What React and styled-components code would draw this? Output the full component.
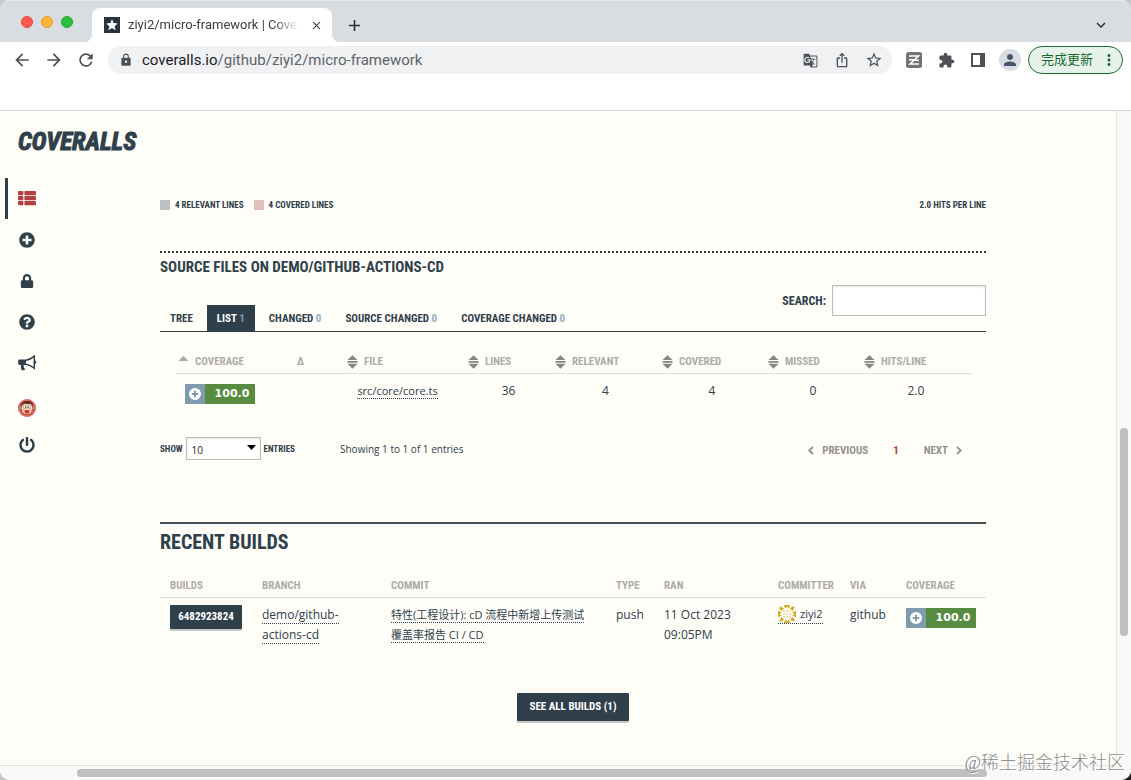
import React from "react";
import styled, { createGlobalStyle } from "styled-components";
import { FaLock, FaPlusCircle, FaQuestionCircle, FaPowerOff } from "react-icons/fa";
import {
  MdArrowBack,
  MdArrowForward,
  MdRefresh,
  MdStarBorder,
  MdExtension,
  MdPerson,
  MdLock,
  MdGTranslate,
  MdIosShare,
  MdKeyboardArrowDown,
  MdAdd,
  MdClose,
  MdMoreVert,
  MdStar,
} from "react-icons/md";

const ink = "#2f404b";
const condensed = `"Roboto Condensed", "Liberation Sans Narrow", "DejaVu Sans Condensed", sans-serif`;
const body = `"Open Sans", "Noto Sans CJK SC", sans-serif`;
const chrome = `Roboto, "Noto Sans CJK SC", sans-serif`;

const GlobalStyle = createGlobalStyle`
  * { box-sizing: border-box; }
  body {
    margin: 0;
    background: linear-gradient(135deg, #c6c8ca 70%, #222 100%);
    color: ${ink};
    font-family: ${body};
    font-size: 12px;
    line-height: 20px;
  }
  button, input, select { font: inherit; color: inherit; margin: 0; }
  button { border: 0; padding: 0; background: none; cursor: pointer; }
  a { color: inherit; text-decoration: none; }
  svg { display: block; flex: none; }
`;

const Window = styled.div`
  display: flex;
  flex-direction: column;
  min-height: 100vh;
  border-radius: 10px;
  overflow: hidden;
  background: #fff;
  position: relative;
`;

/* Browser frame */
const TabStrip = styled.header`
  display: flex;
  align-items: flex-end;
  height: 42px;
  padding-right: 20px;
  background: #d9dce1;
  border-top: 1px solid #e6e8eb;
  font-family: ${chrome};
`;
const Lights = styled.div`
  display: flex;
  gap: 8px;
  align-self: center;
  padding-left: 21px;
  width: 92px;
`;
const Light = styled.button`
  width: 12px;
  height: 12px;
  border-radius: 50%;
  background: ${(p) => p.$fill};
  border: 1px solid ${(p) => p.$edge};
`;
const BrowserTab = styled.div`
  position: relative;
  display: flex;
  align-items: center;
  gap: 8px;
  width: 240px;
  height: 34px;
  padding: 0 10px 0 12px;
  border-radius: 8px 8px 0 0;
  background: #fff;
  color: #3c4043;
  &::before, &::after {
    content: "";
    position: absolute;
    bottom: 0;
    width: 8px;
    height: 8px;
  }
  &::before { left: -8px; background: radial-gradient(circle at 0 0, transparent 8px, #fff 8px); }
  &::after { right: -8px; background: radial-gradient(circle at 100% 0, transparent 8px, #fff 8px); }
`;
const Favicon = styled.span`
  display: grid;
  place-items: center;
  width: 16px;
  height: 16px;
  background: #263640;
  color: #fff;
`;
const TabTitle = styled.span`
  flex: 1;
  white-space: nowrap;
  font-size: 13px;
  mask-image: linear-gradient(to right, #000 84%, transparent 98%);
`;
const IconButton = styled.button`
  display: grid;
  place-items: center;
  width: ${(p) => p.$size || 24}px;
  height: ${(p) => p.$size || 24}px;
  color: ${(p) => p.$color || "#4d5156"};
`;
const NewTab = styled(IconButton)`
  margin: 0 auto 5px 10px;
`;
const TabMenu = styled(IconButton)`
  margin-bottom: 7px;
`;
const Toolbar = styled.nav`
  display: flex;
  align-items: center;
  gap: 8px;
  height: 36px;
  padding: 0 8px 0 10px;
  font-family: ${chrome};
`;
const AddressBar = styled.div`
  display: flex;
  flex: 1;
  align-items: center;
  gap: 8px;
  height: 28px;
  margin: 0 2px;
  padding: 0 6px 0 11px;
  border-radius: 14px;
  background: #eff1f3;
  color: #4d5156;
`;
const Url = styled.a`
  flex: 1;
  font-size: 15px;
  padding-left: 1px;
  color: #5f6368;
  b { font-weight: 400; color: #202124; }
`;
const Profile = styled.button`
  display: grid;
  place-items: center;
  width: 22px;
  height: 22px;
  margin: 0 -1px 0 1px;
  border-radius: 50%;
  background: #d9dce3;
  color: #46536a;
`;
const UpdateButton = styled.button`
  display: flex;
  align-items: center;
  justify-content: space-between;
  width: 95px;
  height: 28px;
  padding: 0 4px 0 12px;
  border: 1px solid #1b6b34;
  border-radius: 14px;
  background: #e7f2ea;
  color: #17692f;
  font-size: 13px;
`;
const Bookmarks = styled.div`
  height: 33px;
  border-bottom: 1px solid #d3d5d8;
`;

/* Scrollable viewport */
const Viewport = styled.div`
  flex: 1;
  display: grid;
  grid-template-columns: minmax(0, 1fr) 15px;
  grid-template-rows: 1fr 15px;
`;
const Track = styled.div`
  display: flex;
  flex-direction: ${(p) => (p.$vertical ? "column" : "row")};
  padding: ${(p) => (p.$vertical ? "0 3px" : "3px 0")};
  background: #f9f9f9;
  border: 0 solid #e3e3e2;
  border-width: ${(p) => (p.$vertical ? "0 0 0 1px" : "1px 0 0 0")};
`;
const Space = styled.i`
  flex: ${(p) => p.$grow} 0 0;
`;
const Thumb = styled(Space)`
  border-radius: 4px;
  background: #bfbfbf;
`;
const Corner = styled.div`
  background: #f9f9f9;
`;
const Page = styled.div`
  background: #fefdf8;
  display: grid;
  grid-template-columns: 160px minmax(0, 1fr) 130px;
`;

/* Site sidebar */
const Logo = styled.a`
  display: block;
  padding: 15px 0 0 18px;
  font: italic 700 25px/32px ${condensed};
  -webkit-text-stroke: 1px ${ink};
`;
const SideNav = styled.nav`
  display: flex;
  flex-direction: column;
  padding: 20px 0 0 5px;
`;
const SideLink = styled.a`
  display: grid;
  place-items: center;
  width: 41px;
  height: 41px;
  padding-top: ${(p) => (p.$photo ? 9 : 0)}px;
  border-left: 3px solid ${(p) => (p.$active ? ink : "transparent")};
  color: ${(p) => (p.$active ? "#b23f42" : ink)};
`;

/* Main column */
const Main = styled.main`
  display: flex;
  flex-direction: column;
  padding: 84px 0 40px;
`;
const Legend = styled.div`
  display: flex;
  gap: 10px;
  height: 20px;
  margin-bottom: 36px;
  font: 700 9px/20px ${condensed};
`;
const Key = styled.span`
  display: flex;
  align-items: center;
  gap: 5px;
  &::before { content: ""; width: 10px; height: 10px; background: ${(p) => p.$color}; }
`;
const Hits = styled.span`
  margin-left: auto;
`;
const Section = styled.section`
  display: flex;
  flex-direction: column;
  border-top: 2px ${(p) => (p.$dotted ? "dotted #2f404b" : "solid #435058")};
`;
const Title = styled.h3`
  margin: 0 0 4px;
  font: 700 15px/28px ${condensed};
`;
const BigTitle = styled.h2`
  margin: 0 0 16px;
  font: 700 20px/36px ${condensed};
`;
const Tools = styled.div`
  display: flex;
  align-items: flex-end;
  justify-content: space-between;
  height: 47px;
  margin-bottom: 20px;
  border-bottom: 1px solid ${ink};
`;
const Tabs = styled.div`
  display: flex;
  gap: 4px;
`;
const Tab = styled.button`
  height: 26px;
  padding: 2px 10px 0;
  background: ${(p) => (p.$active ? ink : "transparent")};
  color: ${(p) => (p.$active ? "#fff" : ink)};
  font: 700 11px/24px ${condensed};
  white-space: nowrap;
  small { font-size: 11px; color: ${(p) => (p.$active ? "#7f9bb0" : "#93aec3")}; }
`;
const Search = styled.label`
  display: flex;
  align-items: center;
  gap: 6px;
  align-self: flex-start;
  font: 700 12px/20px ${condensed};
`;
const SearchBox = styled.input`
  width: 154px;
  height: 31px;
  padding: 0 8px;
  border: 1px solid #bdbdbd;
  background: #fff;
  box-shadow: inset 0 1px 2px #e4e4e4;
`;

const Table = styled.table`
  table-layout: fixed;
  border-collapse: collapse;
  margin: 0 ${(p) => p.$inset || 0}px;
`;
const Th = styled.th`
  height: 21px;
  padding: 0 0 0 10px;
  border-bottom: 1px solid #dcdcd8;
  color: #adaca8;
  text-align: left;
  font: 700 11px/20px ${condensed};
  white-space: nowrap;
`;
const SortButton = styled.button`
  display: flex;
  align-items: center;
  gap: 6px;
  font: inherit;
`;
const Td = styled.td`
  vertical-align: top;
  padding: 7px 0 8px 10px;
  white-space: nowrap;
`;
const FileTd = styled.td`
  height: 43px;
  vertical-align: top;
  padding: 7px 0 0 ${(p) => p.$indent || 0}px;
  text-align: center;
`;
const DottedLink = styled.a`
  display: ${(p) => (p.$flex ? "inline-flex" : "inline")};
  gap: 4px;
  align-items: center;
  border-bottom: 1px dotted ${ink};
  font-size: ${(p) => p.$size || 12}px;
  line-height: ${(p) => (p.$flex ? "18px" : "20px")};
`;
const Badge = styled.a`
  display: flex;
  width: 70px;
  height: 20px;
  margin: 3px 0 0 ${(p) => p.$left || 0}px;
  background: #568b40;
  color: #fff;
  font: 700 11px/20px "DejaVu Sans", sans-serif;
  text-align: center;
  span { flex: 1; padding-left: 4px; }
`;
const BadgeIcon = styled.i`
  display: grid;
  place-items: center;
  width: 20px;
  background: #7e9bb0;
`;
const TableFooter = styled.div`
  display: flex;
  align-items: center;
  height: 23px;
  margin: 21px 0 62px;
`;
const Entries = styled.label`
  display: flex;
  align-items: center;
  gap: 3px;
  width: 180px;
  font: 700 9px/20px ${condensed};
`;
const SelectWrap = styled.span`
  display: grid;
  align-items: center;
  > * { grid-area: 1 / 1; }
  svg { justify-self: end; margin: 0 5px 2px 0; pointer-events: none; }
`;
const Select = styled.select`
  appearance: none;
  width: 75px;
  height: 23px;
  padding: 2px 5px 0;
  border: 1px solid #bdbdbd;
  border-radius: 0;
  background: #fff;
  box-shadow: inset 0 1px 2px #e4e4e4;
  color: #222;
  font: 400 10px/20px ${body};
`;
const Info = styled.span`
  font-size: 10px;
`;
const Pager = styled.nav`
  display: flex;
  align-items: center;
  gap: 25px;
  margin: 4px 24px 0 auto;
  color: #92918e;
  font: 700 11px/20px ${condensed};
  a { display: flex; align-items: center; gap: 8px; }
`;
const Current = styled.a`
  color: #b8373b;
`;
const BuildButton = styled.a`
  display: block;
  width: 72px;
  height: 24px;
  border-radius: 1px;
  background: ${ink};
  box-shadow: 0 2px 0 #c5c7c6;
  color: #fff;
  text-align: center;
  font: 700 11px/24px ${condensed};
`;
const SeeAll = styled(BuildButton)`
  align-self: center;
  width: 112px;
  height: 28px;
  margin-top: 40px;
  line-height: 28px;
`;
const Watermark = styled.div`
  position: absolute;
  right: 6px;
  bottom: 4px;
  color: #8d8d8d;
  font: 300 18px/26px "Liberation Serif", "Noto Sans CJK SC", serif;
  text-shadow: 1px 1px 0 #fff;
`;

/* Drawings */
const SortIcon = ({ up }) => (
  <svg width="11" height="14" viewBox="0 0 11 14" fill={up ? "#adaca8" : "#868686"}>
    <path d={up ? "M5.500.7 10.500 6H.500z" : "M5.500.300 10.500 5H.500zM.500 6h10v1.800H.500zM.500 8.800h10L5.500 13.700z"} />
  </svg>
);
const ListIcon = () => (
  <svg width="18" height="15" viewBox="0 0 18 15" fill="currentColor">
    {[0, 5, 10].map((y) => (
      <g key={y}>
        <rect x="0" y={y} width="5.400" height="4.200" rx="1" />
        <rect x="6.400" y={y} width="11.600" height="4.200" rx="1" />
      </g>
    ))}
  </svg>
);
const HornIcon = () => (
  <svg width="19" height="16" viewBox="0 0 19 16" fill="currentColor">
    <path d="M1.500 4.500H8V10H5.800c-.6 1 .2 1.500.1 2.300 0 .7.700 1.200 1.400 1.900-.8 1.400-2.900 1.300-3.800.7-.4-1.600-1-3.200-.5-4.900H1.500C.7 10 .2 9.400.2 8.600V5.900c0-.8.500-1.400 1.300-1.400z" />
    <path d="M8 5.300C11 4.900 13.800 3.300 16.300 1.100v12.200C13.800 11.200 11 9.700 8 9.200" fill="none" stroke="currentColor" strokeWidth="1.500" />
    <path d="M17 5.500c1.800.4 1.800 3 0 3.400z" />
  </svg>
);
const Avatar = () => (
  <svg width="18" height="18" viewBox="0 0 18 18">
    <circle cx="9" cy="9" r="9" fill="#e0645c" />
    <circle cx="2.900" cy="9" r="1.500" fill="#f3c39d" stroke="#5d2b22" strokeWidth=".4" />
    <circle cx="15.100" cy="9" r="1.500" fill="#f3c39d" stroke="#5d2b22" strokeWidth=".4" />
    <ellipse cx="9" cy="9.500" rx="5.800" ry="6" fill="#f9dcc0" stroke="#5d2b22" strokeWidth=".6" />
    <path d="M2.900 7C3 3.600 6 1.800 9.200 1.900c3.500-.1 6.200 1.800 6 5.100L12.600 4.600 9.600 5.200 7 4.600 4.600 5.500z" fill="#5d2b22" />
    <circle cx="7" cy="8" r="1.700" fill="#fff" stroke="#654" strokeWidth=".4" />
    <circle cx="11" cy="8" r="1.700" fill="#fff" stroke="#654" strokeWidth=".4" />
    <circle cx="7.400" cy="8.200" r=".6" fill="#211" />
    <circle cx="10.600" cy="8.200" r=".6" fill="#211" />
    <circle cx="5" cy="11" r=".9" fill="#ee9a86" />
    <circle cx="13" cy="11" r=".9" fill="#ee9a86" />
    <path d="M6.300 11.300h5.400c-.3 2.500-1.500 3.300-2.700 3.300s-2.500-.9-2.700-3.300z" fill="#d2232a" />
  </svg>
);
const Identicon = () => (
  <svg width="18" height="18" viewBox="0 0 18 18" fill="#d0ac25">
    {[0, 90, 180, 270].map((a) => (
      <g key={a} transform={`rotate(${a} 9 9)`}>
        <path d="M5.800 0h6.400L10.800 3.600 9 1.600 7.200 3.600z" />
        <path d="M3 .8V3.600H.8zM3.600 2 6 3.400 3.600 6 1.500 4z" />
      </g>
    ))}
    {[6, 9, 12].map((x) => [6, 9, 12].map((y) => <rect key={`${x}-${y}`} x={x - 0.6} y={y - 0.6} width="1.200" height="1.200" />))}
  </svg>
);
const Chevron = ({ right }) => (
  <svg width="6" height="9" viewBox="0 0 6 9" fill="none" stroke="currentColor" strokeWidth="1.800">
    <path d={right ? "M1 1l3.800 3.500L1 8" : "M5 1 1.200 4.500 5 8"} />
  </svg>
);
const ZIcon = () => (
  <svg width="16" height="16" viewBox="0 0 16 16">
    <rect width="16" height="16" rx="2.500" fill="#737373" />
    <path d="M3 4h9.500L4 12h9M3 7.800h5M8.500 8.200H13" fill="none" stroke="#fff" strokeWidth="1.500" />
  </svg>
);
const PanelIcon = () => (
  <svg width="14" height="14" viewBox="0 0 14 14" fill="none" stroke="#4d5156">
    <path d="M1 1h12v12H1z" strokeWidth="2" />
    <path d="M11 1v12" strokeWidth="4" />
  </svg>
);
const PlusDisc = () => (
  <svg width="12" height="12" viewBox="0 0 12 12">
    <circle cx="6" cy="6" r="6" fill="#fff" />
    <path d="M6 2.700v6.600M2.700 6h6.600" stroke="#7e9bb0" strokeWidth="2" />
  </svg>
);

const CoverageBadge = ({ left }) => (
  <Badge href="#coverage" $left={left}>
    <BadgeIcon><PlusDisc /></BadgeIcon>
    <span>100.0</span>
  </Badge>
);

const fileColumns = [
  { label: "COVERAGE", width: 107, sort: "up", pad: 3 },
  { label: "Δ", width: 55, pad: 15 },
  { label: "FILE", width: 121, sort: "both" },
  { label: "LINES", width: 87, sort: "both" },
  { label: "RELEVANT", width: 107, sort: "both" },
  { label: "COVERED", width: 106, sort: "both" },
  { label: "MISSED", width: 96, sort: "both" },
  { label: "HITS/LINE", sort: "both" },
];
const SortTh = styled(Th)`
  padding-left: ${(p) => p.$pad}px;
`;
const buildColumns = [
  ["BUILDS", 92],
  ["BRANCH", 129],
  ["COMMIT", 225],
  ["TYPE", 48],
  ["RAN", 114],
  ["COMMITTER", 72],
  ["VIA", 56],
  ["COVERAGE"],
];
const tabs = [
  ["TREE"],
  ["LIST", 1],
  ["CHANGED", 0],
  ["SOURCE CHANGED", 0],
  ["COVERAGE CHANGED", 0],
];

export default function App() {
  return (
    <Window>
      <GlobalStyle />
      <TabStrip>
        <Lights>
          <Light aria-label="Close window" $fill="#fe5850" $edge="#e2453e" />
          <Light aria-label="Minimize window" $fill="#fdb536" $edge="#e09b26" />
          <Light aria-label="Zoom window" $fill="#2bbf3e" $edge="#1ea42f" />
        </Lights>
        <BrowserTab>
          <Favicon><MdStar size={14} /></Favicon>
          <TabTitle>ziyi2/micro-framework | Cover</TabTitle>
          <IconButton $size={12} $color="#3c4043" aria-label="Close tab"><MdClose size={13} /></IconButton>
        </BrowserTab>
        <NewTab $color="#2d3033" aria-label="New tab"><MdAdd size={19} /></NewTab>
        <TabMenu $size={20} $color="#2d3033" aria-label="Search tabs"><MdKeyboardArrowDown size={18} /></TabMenu>
      </TabStrip>
      <Toolbar>
        <IconButton aria-label="Back"><MdArrowBack size={20} /></IconButton>
        <IconButton aria-label="Forward"><MdArrowForward size={20} /></IconButton>
        <IconButton aria-label="Reload"><MdRefresh size={20} /></IconButton>
        <AddressBar>
          <MdLock size={14} />
          <Url href="#top"><b>coveralls.io</b>/github/ziyi2/micro-framework</Url>
          <IconButton aria-label="Translate"><MdGTranslate size={15} /></IconButton>
          <IconButton aria-label="Share"><MdIosShare size={16} /></IconButton>
          <IconButton aria-label="Bookmark"><MdStarBorder size={18} /></IconButton>
        </AddressBar>
        <IconButton aria-label="Z extension"><ZIcon /></IconButton>
        <IconButton aria-label="Extensions"><MdExtension size={17} /></IconButton>
        <IconButton aria-label="Side panel"><PanelIcon /></IconButton>
        <Profile aria-label="Profile"><MdPerson size={18} /></Profile>
        <UpdateButton>完成更新<MdMoreVert size={18} /></UpdateButton>
      </Toolbar>
      <Bookmarks />

      <Viewport>
        <Page>
          <div>
            <Logo href="#home">COVERALLS</Logo>
            <SideNav>
              <SideLink href="#repos" aria-label="Repos" $active><ListIcon /></SideLink>
              <SideLink href="#add" aria-label="Add repos"><FaPlusCircle size={16} /></SideLink>
              <SideLink href="#private" aria-label="Private"><FaLock size={14} /></SideLink>
              <SideLink href="#help" aria-label="Help"><FaQuestionCircle size={16} /></SideLink>
              <SideLink href="#news" aria-label="News"><HornIcon /></SideLink>
              <SideLink href="#account" aria-label="Account" $photo><Avatar /></SideLink>
              <SideLink href="#logout" aria-label="Sign out"><FaPowerOff size={16} /></SideLink>
            </SideNav>
          </div>

          <Main>
            <Legend>
              <Key $color="#bcc2c1">4 RELEVANT LINES</Key>
              <Key $color="#e4c0bd">4 COVERED LINES</Key>
              <Hits>2.0 HITS PER LINE</Hits>
            </Legend>

            <Section $dotted>
              <Title>SOURCE FILES ON DEMO/GITHUB-ACTIONS-CD</Title>
              <Tools>
                <Tabs>
                  {tabs.map(([label, count]) => (
                    <Tab key={label} $active={label === "LIST"}>
                      {label}
                      {count !== undefined && <small> {count}</small>}
                    </Tab>
                  ))}
                </Tabs>
                <Search>SEARCH:<SearchBox type="text" /></Search>
              </Tools>
              <Table $inset={15}>
                <colgroup>
                  {fileColumns.map((c) => <col key={c.label} width={c.width} />)}
                </colgroup>
                <thead>
                  <tr>
                    {fileColumns.map((c) => (
                      <SortTh key={c.label} $pad={c.pad || 10}>
                        {c.sort ? <SortButton><SortIcon up={c.sort === "up"} />{c.label}</SortButton> : c.label}
                      </SortTh>
                    ))}
                  </tr>
                </thead>
                <tbody>
                  <tr>
                    <FileTd><CoverageBadge left={10} /></FileTd>
                    <FileTd />
                    <FileTd><DottedLink href="#file" $size={11}>src/core/core.ts</DottedLink></FileTd>
                    <FileTd $indent={14}>36</FileTd>
                    <FileTd $indent={14}>4</FileTd>
                    <FileTd $indent={14}>4</FileTd>
                    <FileTd $indent={14}>0</FileTd>
                    <FileTd $indent={7}>2.0</FileTd>
                  </tr>
                </tbody>
              </Table>
              <TableFooter>
                <Entries>
                  SHOW
                  <SelectWrap>
                    <Select defaultValue="10"><option>10</option><option>25</option></Select>
                    <svg width="9" height="5" viewBox="0 0 9 5"><path d="M0 0h9L4.500 5z" /></svg>
                  </SelectWrap>
                  ENTRIES
                </Entries>
                <Info>Showing 1 to 1 of 1 entries</Info>
                <Pager>
                  <a href="#prev"><Chevron />PREVIOUS</a>
                  <Current href="#1">1</Current>
                  <a href="#next">NEXT<Chevron right /></a>
                </Pager>
              </TableFooter>
            </Section>

            <Section>
              <BigTitle>RECENT BUILDS</BigTitle>
              <Table>
                <colgroup>
                  {buildColumns.map(([label, width]) => <col key={label} width={width} />)}
                </colgroup>
                <thead>
                  <tr>{buildColumns.map(([label]) => <Th key={label}>{label}</Th>)}</tr>
                </thead>
                <tbody>
                  <tr>
                    <Td><BuildButton href="#build">6482923824</BuildButton></Td>
                    <Td><DottedLink href="#branch">demo/github-<br />actions-cd</DottedLink></Td>
                    <Td><DottedLink href="#commit" $size={11}>特性(工程设计): cD 流程中新增上传测试<br />覆盖率报告 CI / CD</DottedLink></Td>
                    <Td>push</Td>
                    <Td>11 Oct 2023<br />09:05PM</Td>
                    <Td><DottedLink href="#ziyi2" $flex $size={11}><Identicon />ziyi2</DottedLink></Td>
                    <Td>github</Td>
                    <Td><CoverageBadge /></Td>
                  </tr>
                </tbody>
              </Table>
              <SeeAll href="#builds">SEE ALL BUILDS (1)</SeeAll>
            </Section>
          </Main>
        </Page>
        <Track $vertical>
          <Space $grow={318} />
          <Thumb $grow={209} />
          <Space $grow={129} />
        </Track>
        <Track>
          <Space $grow={77} />
          <Thumb $grow={910} />
          <Space $grow={129} />
        </Track>
        <Corner />
      </Viewport>
      <Watermark>@稀土掘金技术社区</Watermark>
    </Window>
  );
}
